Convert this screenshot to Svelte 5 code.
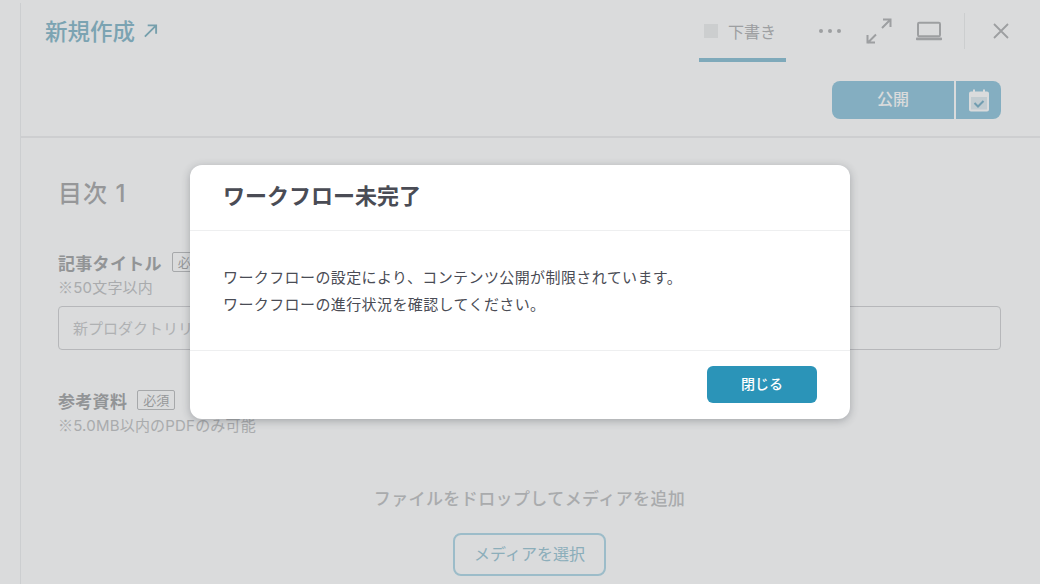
<script lang="ts">
  let open = $state(true);
</script>

<div class="page">
  <main class="editor">
    <header class="head">
      <div class="top">
        <a class="title" href="#top">
          新規作成
          <svg width="15" height="15" viewBox="0 0 16 16" fill="none" stroke="currentColor" stroke-width="2">
            <path d="M2 14.500 13.500 3M5 2.500H14V11.500" />
          </svg>
        </a>
        <div class="tools">
          <div class="tab"><span class="square"></span>下書き</div>
          <span class="dots"><i></i><i></i><i></i></span>
          <svg class="expand" width="28" height="28" viewBox="0 0 28 28" fill="none" stroke="currentColor" stroke-width="2">
            <path d="M2.500 26 11 17.500M2.500 18V25.500H10M25.500 2.500 17 11M18 2.500H25.500V10" />
          </svg>
          <svg class="laptop" width="28" height="22" viewBox="0 0 28 22" fill="none">
            <rect x="3" y="2.800" width="22" height="13.400" rx="1.200" stroke="currentColor" stroke-width="2" />
            <rect x="1" y="17.500" width="26" height="2.800" rx="0.800" fill="currentColor" />
          </svg>
          <span class="rule"></span>
          <svg class="close" width="18" height="18" viewBox="0 0 18 18" fill="none" stroke="currentColor" stroke-width="1.800">
            <path d="M2 2 16 16M16 2 2 16" />
          </svg>
        </div>
      </div>
      <div class="actions">
        <button class="publish" type="button">公開</button>
        <button class="schedule" type="button" aria-label="予約">
          <svg width="22" height="24" viewBox="0 0 22 24" fill="none">
            <path fill="#fff" d="M3 3.500h16A2 2 0 0 1 21 5.500v16a2 2 0 0 1-2 2H3a2 2 0 0 1-2-2v-16a2 2 0 0 1 2-2z" />
            <path d="M6 1.500v4M16 1.500v4" stroke="#fff" stroke-width="2" />
            <path d="M3 9h16v12.500H3z" fill="#e2edf2" />
            <path d="M6.500 15 10 18.500l5.500-5.500" stroke="#80b4ca" stroke-width="2" />
          </svg>
        </button>
      </div>
    </header>

    <section class="body">
      <h2>目次 1</h2>

      <div class="field first">
        <div class="label">記事タイトル<span class="tag">必須</span></div>
        <p class="hint"><span class="mark">※</span>50文字以内</p>
        <input type="text" placeholder="新プロダクトリリース" />
      </div>

      <div class="field second">
        <div class="label">参考資料<span class="tag">必須</span></div>
        <p class="hint"><span class="mark">※</span>5.0MB以内のPDFのみ可能</p>
        <div class="drop">
          <p>ファイルをドロップしてメディアを追加</p>
          <button type="button">メディアを選択</button>
        </div>
      </div>
    </section>
  </main>

  {#if open}
    <div class="overlay">
      <div class="modal" role="dialog" aria-modal="true">
        <h3>ワークフロー未完了</h3>
        <div class="message">
          <p>ワークフローの設定により、コンテンツ公開が制限されています。</p>
          <p>ワークフローの進行状況を確認してください。</p>
        </div>
        <div class="foot">
          <button type="button" onclick={() => (open = false)}>閉じる</button>
        </div>
      </div>
    </div>
  {/if}
</div>

<style>
  :global(body) {
    margin: 0;
    background: #fff;
  }
  .page {
    position: relative;
    height: 584px;
    overflow: hidden;
    padding-left: 20px;
    box-sizing: border-box;
    font-family: Inter, "Noto Sans CJK JP", sans-serif;
    color: #acadae;
  }
  .editor {
    height: 584px;
    border-left: 1px solid #eef0f1;
    margin-top: 3px;
  }
  .head {
    height: 135px;
    box-sizing: border-box;
    border-bottom: 2px solid #eff0f1;
  }
  .top {
    display: flex;
    justify-content: space-between;
    height: 59px;
  }
  .title {
    display: flex;
    align-items: center;
    gap: 8px;
    height: 54px;
    margin-left: 24px;
    color: #8bbbcc;
    font-size: 22.500px;
    font-weight: 500;
    text-decoration: none;
  }
  .title svg {
    color: #85b6c5;
  }
  .tools {
    display: flex;
    align-items: center;
    height: 56px;
    color: #b5b6b8;
  }
  .tab {
    display: flex;
    align-items: center;
    gap: 10px;
    width: 87px;
    height: 59px;
    box-sizing: border-box;
    padding-left: 5px;
    margin-top: 3px;
    border-bottom: 4px solid #8fc2d6;
    font-size: 16px;
    color: #b5b6b8;
  }
  .square {
    width: 14px;
    height: 14px;
    background: #eeeff0;
  }
  .dots {
    display: flex;
    gap: 5px;
    margin: 0 24px 0 33px;
  }
  .dots i {
    width: 4px;
    height: 4px;
    border-radius: 50%;
    background: #b5b6b8;
  }
  .expand {
    margin-right: 22px;
  }
  .laptop {
    margin: 0 21px 0 0;
  }
  .rule {
    width: 1px;
    height: 36px;
    background: #eeeff0;
    margin-right: 27px;
  }
  .close {
    margin-right: 30px;
  }
  .actions {
    display: flex;
    justify-content: flex-end;
    gap: 2px;
    margin-top: 19px;
    padding-right: 39px;
  }
  .actions button {
    height: 38px;
    border: 0;
    padding: 0;
    background: #96c9de;
    color: #fff;
    font: inherit;
    font-size: 16px;
    font-weight: 500;
  }
  .actions .publish {
    width: 122px;
    padding-bottom: 5px;
    border-radius: 8px 0 0 8px;
  }
  .schedule {
    width: 45px;
    border-radius: 0 8px 8px 0;
    display: flex;
    align-items: center;
    justify-content: center;
  }
  .body {
    padding: 0 39px 0 37px;
  }
  h2 {
    margin: 0;
    padding-top: 40px;
    font-size: 24px;
    line-height: 32px;
    font-weight: 500;
    letter-spacing: 1px;
    color: #acadae;
  }
  .field.first {
    margin-top: 40px;
  }
  .field.second {
    margin-top: 38px;
  }
  .label {
    display: flex;
    align-items: center;
    height: 24px;
    font-size: 17px;
    letter-spacing: 0.300px;
    font-weight: 700;
    color: #a8a9aa;
  }
  .tag {
    margin-left: 10px;
    width: 38px;
    height: 20px;
    box-sizing: border-box;
    border: 1px solid #c0c1c3;
    border-radius: 2px;
    font-size: 13px;
    font-weight: 400;
    letter-spacing: 0;
    line-height: 18px;
    text-align: center;
    color: #acadae;
  }
  .hint {
    margin: 1px 0 0;
    font-size: 15px;
    letter-spacing: 0.200px;
    line-height: 23px;
    color: #c4c5c6;
  }
  .mark {
    font-family: "Noto Sans CJK JP", sans-serif;
  }
  input {
    display: block;
    width: 100%;
    height: 44px;
    box-sizing: border-box;
    margin-top: 7px;
    padding: 0 14px;
    border: 1px solid #d3d4d6;
    border-radius: 4px;
    background: transparent;
    font: inherit;
    font-size: 15px;
  }
  input::placeholder {
    color: #cbcccd;
  }
  .drop {
    margin-top: 8px;
    padding-top: 42px;
    text-align: center;
  }
  .drop p {
    margin: 0;
    font-size: 17px;
    letter-spacing: 0.400px;
    line-height: 24px;
    font-weight: 500;
    color: #c4c5c6;
  }
  .drop button {
    margin-top: 22px;
    width: 153px;
    height: 43px;
    border: 2px solid #b4dae8;
    border-radius: 8px;
    background: transparent;
    font: inherit;
    font-size: 16px;
    padding-bottom: 5px;
    color: #a0c8d6;
  }
  .overlay {
    position: absolute;
    inset: 0;
    display: flex;
    align-items: center;
    justify-content: center;
    background: rgba(52, 55, 60, 0.18);
  }
  .modal {
    width: 660px;
    height: 254px;
    display: flex;
    flex-direction: column;
    background: #fff;
    border-radius: 12px;
    box-shadow: 0 2px 8px rgba(40, 45, 55, 0.3);
  }
  h3 {
    margin: 0;
    height: 66px;
    box-sizing: border-box;
    padding: 16px 34px 0 33px;
    border-bottom: 1px solid #eeeff0;
    font-size: 22px;
    line-height: 30px;
    font-weight: 700;
    color: #4a4c55;
  }
  .message {
    flex: 1;
    box-sizing: border-box;
    padding: 33px 34px 0 33px;
    border-bottom: 1px solid #eeeff0;
    font-size: 15px;
    letter-spacing: 0.400px;
    line-height: 27px;
    color: #4a4c55;
  }
  .message p {
    margin: 0;
  }
  .foot {
    display: flex;
    justify-content: flex-end;
    height: 68px;
    box-sizing: border-box;
    padding: 15px 33px 0 0;
  }
  .foot button {
    width: 110px;
    height: 37px;
    border: 0;
    border-radius: 6px;
    background: #2b94b8;
    color: #fff;
    font: inherit;
    font-size: 14px;
    font-weight: 500;
    padding-bottom: 5px;
  }
</style>
